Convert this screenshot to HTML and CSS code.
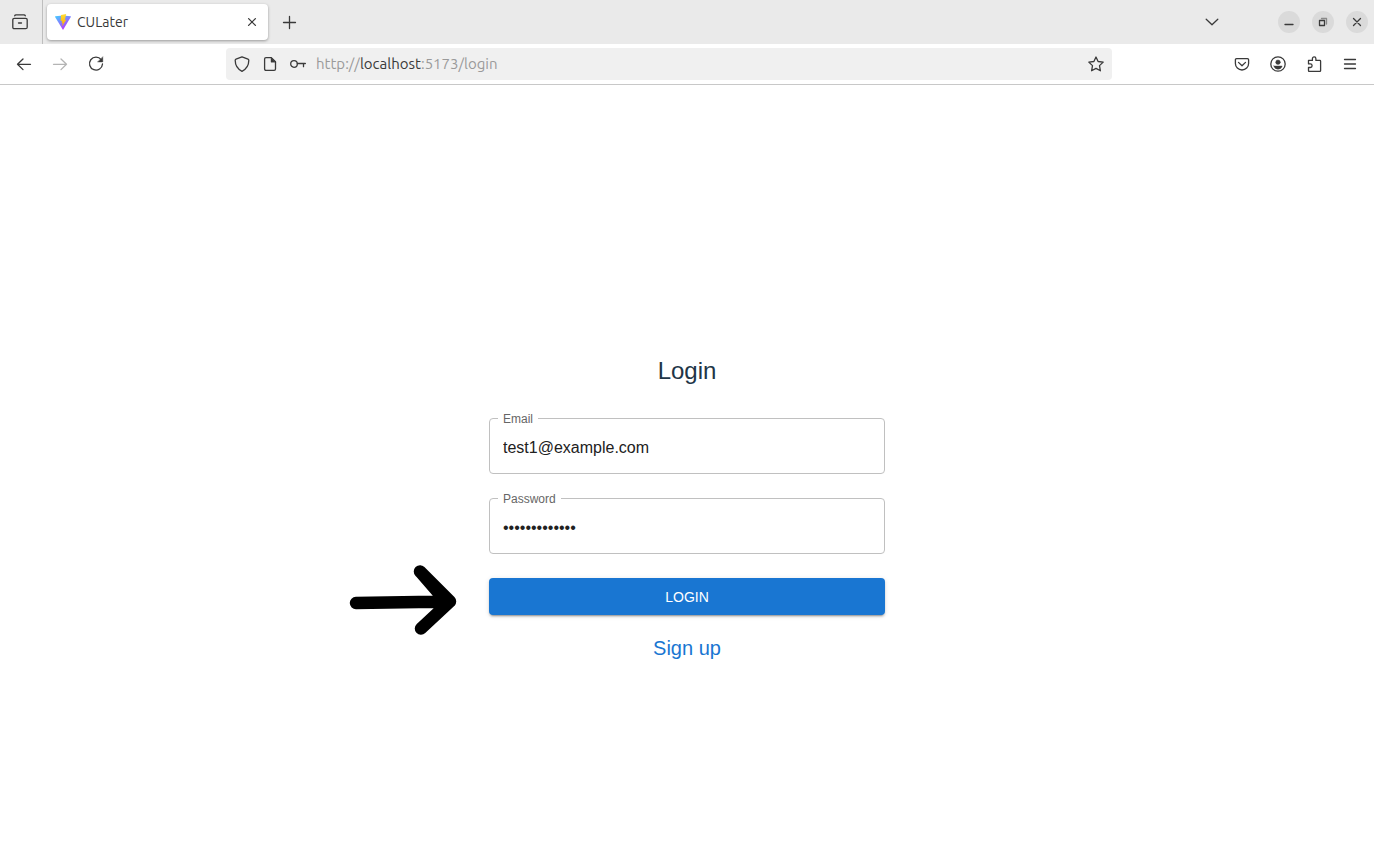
FILE: index.html
```html
<!DOCTYPE html>
<html lang="en">
<head>
<meta charset="utf-8">
<meta name="viewport" content="width=device-width, initial-scale=1">
<title>CULater</title>
<link rel="stylesheet" href="styles.css">
</head>
<body>
<header class="browser">
  <div class="tabbar">
    <button class="tab-view" type="button" aria-label="View tabs">
      <svg class="icon" viewBox="0 0 16 16"><path d="M2.700 1.800q.3-.9 1.300-.9h8q1 0 1.300.9M2.300 4.300h11.400q1.500 0 1.500 1.500v7.400q0 1.500-1.500 1.500H2.300q-1.500 0-1.500-1.500V5.800q0-1.500 1.500-1.500zM6.500 9h3"/></svg>
    </button>
    <div class="tab">
      <svg class="icon" viewBox="0 0 16 16">
        <defs>
          <linearGradient id="v" x1="0" y1="0" x2=".6" y2="1"><stop offset="0" stop-color="#41d1ff"/><stop offset="1" stop-color="#bd34fe"/></linearGradient>
          <linearGradient id="b" x1="0" y1="0" x2="0" y2="1"><stop offset="0" stop-color="#ffdd35"/><stop offset="1" stop-color="#ffa800"/></linearGradient>
        </defs>
        <path d="M.3 2.300 8 1.600l7.700.7Q16 2.500 15.800 3L8.300 15.600q-.3.400-.6 0L.1 3Q0 2.500.3 2.300z" fill="url(#v)" stroke="none"/>
        <path d="M11.200.1 6 1.100 5.600 7.100l1.500-.3-.5 2.300 1.200-.3-.7 3.600L11.400 5.600l-1.600.3z" fill="url(#b)" stroke="none"/>
      </svg>
      <span class="tab-title">CULater</span>
      <button class="tab-close" type="button" aria-label="Close tab">
        <svg class="icon" viewBox="0 0 16 16"><path d="m4.600 4.600 6.800 6.800M11.400 4.600l-6.800 6.800"/></svg>
      </button>
    </div>
    <button class="new-tab" type="button" aria-label="New tab">
      <svg class="icon" viewBox="0 0 16 16"><path d="M7.500 2.500v12M1.500 8.500h12"/></svg>
    </button>
    <div class="window-tools">
      <button class="tool" type="button" aria-label="List all tabs">
        <svg class="icon" viewBox="0 0 16 16"><path d="m2.200 5.200 5.800 5.500 5.800-5.500"/></svg>
      </button>
      <div class="window-controls">
        <button class="round" type="button" aria-label="Minimize"><svg class="icon" viewBox="0 0 16 16"><path d="M4 10.500h8"/></svg></button>
        <button class="round" type="button" aria-label="Restore"><svg class="icon" viewBox="0 0 16 16"><path d="M4.500 6.500h5v5h-5z"/><path class="faint" d="M6.500 4.500h5V10"/></svg></button>
        <button class="round" type="button" aria-label="Close"><svg class="icon" viewBox="0 0 16 16"><path d="m4.500 4.500 7 7M11.500 4.500l-7 7"/></svg></button>
      </div>
    </div>
  </div>

  <div class="toolbar">
    <nav class="tools" aria-label="History">
      <button class="tool" type="button" aria-label="Back"><svg class="icon" viewBox="0 0 16 16"><path d="M14.500 8.300h-13M7 3 1.500 8.300 7 13.600"/></svg></button>
      <button class="tool" type="button" aria-label="Forward" disabled><svg class="icon" viewBox="0 0 16 16"><path d="M1.500 8.300h13M9 3l5.500 5.300L9 13.600"/></svg></button>
      <button class="tool" type="button" aria-label="Reload"><svg class="icon" viewBox="0 0 16 16"><path d="M13.200 3.700A6.500 6.500 0 1 0 14.500 8"/><path class="solid" d="M14.800 1v5H9.800z"/></svg></button>
    </nav>
    <div class="urlbar">
      <button class="url-tool" type="button" aria-label="Tracking protection"><svg class="icon" viewBox="0 0 16 16"><path d="M8 .8 14 3.100q.8.3.8 1.200C14.800 9.500 12 13.300 8 15.300 4 13.300 1.200 9.500 1.200 4.300q0-.9.8-1.200z"/></svg></button>
      <button class="url-tool" type="button" aria-label="Site information"><svg class="icon" viewBox="0 0 16 16"><path d="M4 1.600h5.300l4.200 4.200V13q0 1.400-1.400 1.400H4q-1.400 0-1.400-1.400V3Q2.600 1.600 4 1.600z"/><path class="solid" d="M9 1.600v4.600h4.500z"/></svg></button>
      <button class="url-tool" type="button" aria-label="Saved login"><svg class="icon" viewBox="0 0 16 16"><circle cx="4" cy="8" r="3.300"/><path d="M7.400 7.500h8M13.500 7.500v3.200"/></svg></button>
      <div class="url" role="textbox" contenteditable="true" spellcheck="false" aria-label="Address">http://<span class="host">localhost</span>:5173/login</div>
      <button class="url-tool" type="button" aria-label="Bookmark this page"><svg class="icon" viewBox="0 0 16 16"><path d="M8 1 10.100 5.500l5.100.6-3.700 3.500.9 5.200L8 12.400l-4.400 2.400.9-5.200L.8 6.100l5.100-.6z"/></svg></button>
    </div>
    <div class="tools">
      <button class="tool" type="button" aria-label="Save to Pocket"><svg class="icon" viewBox="0 0 16 16"><path d="M2.500 2.600h11q1.100 0 1.100 1.100v3.700a6.600 6.600 0 0 1-13.200 0V3.700q0-1.100 1.100-1.100zM4.500 6.400 8 9.700l3.500-3.300"/></svg></button>
      <button class="tool" type="button" aria-label="Account"><svg class="icon" viewBox="0 0 16 16"><circle cx="8" cy="8" r="7.200"/><circle class="solid" cx="8" cy="6.200" r="2.300"/><path class="solid" d="M3.800 10h8.400q-1.100 3.300-4.200 3.300T3.800 10z"/></svg></button>
      <button class="tool" type="button" aria-label="Extensions"><svg class="icon" viewBox="0 0 16 16"><path d="M2.500 6.500V4.400h3.900V2.700a1.700 1.700 0 0 1 3.500 0v1.700h3.900q.8 0 .8.800v9.400q0 .8-.8.8H3.300q-.8 0-.8-.8v-3.100h1.800a1.800 1.800 0 0 0 0-3.600H2.500z"/></svg></button>
      <button class="tool" type="button" aria-label="Application menu"><svg class="icon" viewBox="0 0 16 16"><path d="M2.500 3.500h11M2.500 8h11M2.500 12.500h11"/></svg></button>
    </div>
  </div>
</header>

<main class="page">
  <form class="login">
    <h1 class="title">Login</h1>
    <div class="field">
      <label class="label" for="email">Email</label>
      <input class="input" id="email" type="email" value="test1@example.com">
    </div>
    <div class="field">
      <label class="label" for="password">Password</label>
      <input class="input" id="password" type="password" value="passwordtest1">
    </div>
    <div class="submit-row">
      <svg class="pointer" viewBox="0 0 108 70" aria-hidden="true"><path d="m7 38 94-1.500M71 6.500l30 30-29 27M71 6.500l26 30"/></svg>
      <button class="submit" type="submit">LOGIN</button>
    </div>
    <a class="signup" href="#signup">Sign up</a>
  </form>
</main>
</body>
</html>
```
FILE: styles.css
```css
* {
  box-sizing: border-box;
}

body {
  margin: 0;
  min-height: 100vh;
  display: flex;
  flex-direction: column;
  background: #fff;
  font-family: "Liberation Sans", Arial, sans-serif;
}

button {
  border: 0;
  padding: 0;
  background: none;
  color: #3a3a3a;
  font: inherit;
  display: grid;
  place-items: center;
}

.icon {
  display: block;
  width: 16px;
  height: 16px;
  flex: none;
  fill: none;
  stroke: currentColor;
  stroke-width: 1.3;
  stroke-linecap: round;
  stroke-linejoin: round;
}

.icon .solid {
  fill: currentColor;
  stroke-width: 0.4;
}

.icon .faint {
  opacity: 0.5;
}

/* Browser frame */
.browser {
  font-family: Ubuntu, "Noto Sans", sans-serif;
  border-bottom: 1px solid #c8c8c8;
}

.tabbar {
  display: flex;
  align-items: center;
  height: 44px;
  background: #eaeaea;
}

.tab-view {
  align-self: stretch;
  width: 43px;
  padding-right: 2px;
  border-right: 1px solid #bebebe;
}

.tab {
  display: flex;
  align-items: center;
  gap: 6px;
  width: 221px;
  height: 36px;
  margin-left: 4px;
  padding: 0 8px;
  border-radius: 4px;
  background: #fff;
  box-shadow: 0 1px 3px rgba(0, 0, 0, 0.35);
}

.tab-title {
  flex: 1;
  color: #3a3a3a;
  font-size: 14px;
}

.tab-close,
.new-tab {
  width: 16px;
  height: 16px;
}

.new-tab {
  margin-left: 14px;
}

.window-tools {
  display: flex;
  align-items: center;
  gap: 48px;
  margin-left: auto;
  padding-right: 6px;
}

.window-controls {
  display: flex;
  gap: 12px;
}

.round {
  width: 22px;
  height: 22px;
  border-radius: 50%;
  background: #dadada;
}

.toolbar {
  display: flex;
  align-items: center;
  gap: 112px;
  height: 40px;
  padding: 0 6px;
}

.tools {
  display: flex;
}

.tool {
  width: 36px;
  height: 32px;
}

.tool:disabled {
  color: #b4b4b4;
}

.urlbar {
  display: flex;
  align-items: center;
  flex: 1;
  height: 32px;
  padding: 0 2px;
  border-radius: 4px;
  background: #f0f0f0;
}

.url-tool {
  width: 28px;
  height: 32px;
}

.url {
  flex: 1;
  padding-left: 4px;
  color: #9a9a9a;
  font-size: 15px;
  line-height: 20px;
}

.host {
  color: #3a3a3a;
}

/* Login page */
.page {
  flex: 1;
  display: flex;
  align-items: center;
  justify-content: center;
  padding: 66px 24px 0;
}

.login {
  display: flex;
  flex-direction: column;
  gap: 24px;
  width: 100%;
  max-width: 396px;
}

.title {
  margin: 0 0 8px;
  color: #213547;
  font-size: 24px;
  font-weight: 400;
  line-height: 30px;
  text-align: center;
}

.field {
  position: relative;
}

.label {
  position: absolute;
  top: -7px;
  left: 9px;
  padding: 0 5px;
  background: #fff;
  color: #666;
  font-size: 12px;
  line-height: 16px;
}

.input {
  display: block;
  width: 100%;
  height: 56px;
  padding: 4px 13px 0;
  border: 1px solid #c0c0c0;
  border-radius: 4px;
  background: #fff;
  color: #212121;
  font: 16px "Liberation Sans", Arial, sans-serif;
}

.submit-row {
  position: relative;
}

.submit {
  width: 100%;
  height: 37px;
  border-radius: 4px;
  background: #1976d2;
  color: #fff;
  font-size: 14px;
  box-shadow: 0 3px 1px -2px rgba(0, 0, 0, 0.2), 0 2px 2px rgba(0, 0, 0, 0.14), 0 1px 5px rgba(0, 0, 0, 0.12);
}

.pointer {
  position: absolute;
  top: -13px;
  right: calc(100% + 32px);
  width: 108px;
  height: 70px;
  fill: none;
  stroke: #000;
  stroke-width: 12.5;
  stroke-linecap: round;
  stroke-linejoin: round;
}

.signup {
  align-self: center;
  margin-top: -6px;
  color: #1976d2;
  font-size: 20px;
  line-height: 30px;
  text-decoration: none;
}
```
